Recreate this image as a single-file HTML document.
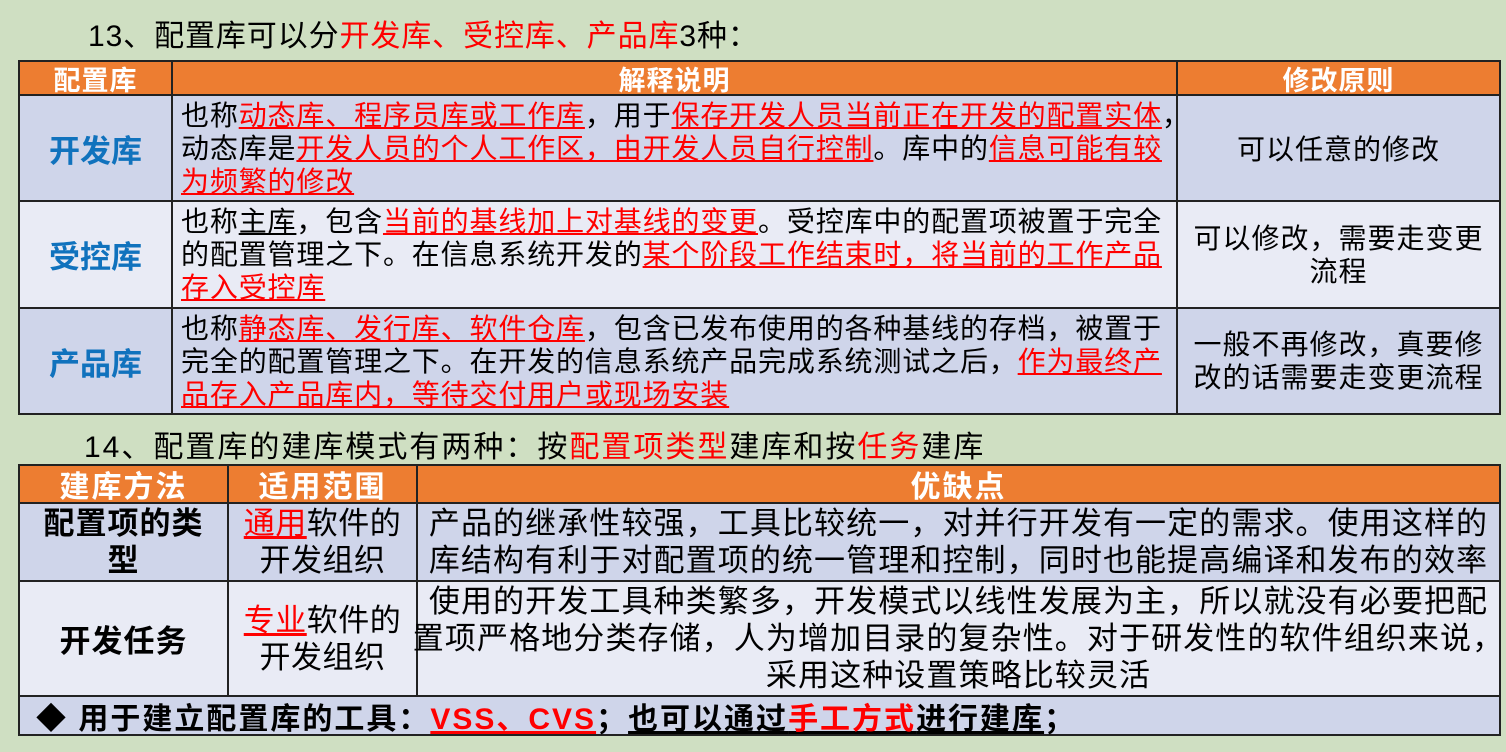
<!DOCTYPE html>
<html><head><meta charset="utf-8"><style>
*{margin:0;padding:0;box-sizing:border-box}
body{width:1506px;height:752px;background:#cfdfc2;font-family:"Liberation Sans","Noto Sans CJK SC",sans-serif;position:relative;overflow:hidden;color:#000}
.a{position:absolute}
.c{position:absolute;border:2px solid #222;display:flex;align-items:center;justify-content:center;text-align:center}
.h{background:#ed7d31;color:#fff;font-weight:bold;font-size:27px;letter-spacing:1px}
.d{background:#cfd5ea}.l{background:#e9ebf5}
.r{color:#f00}.u{text-decoration:underline}
.t{font-size:28px;line-height:33px;white-space:nowrap;letter-spacing:0.85px;text-align:left;justify-content:flex-start;padding-left:8px}
.b{font-weight:bold}
.t2{font-size:31px;line-height:37px;letter-spacing:1.1px;white-space:nowrap}
</style></head><body>
<div class="a" style="left:88px;top:11px;font-size:30px;letter-spacing:0.9px;white-space:nowrap">13、配置库可以分<span class="r">开发库、受控库、产品库</span>3种：</div>

<div class="c h" style="left:18px;top:60px;width:155px;height:36px">配置库</div>
<div class="c h" style="left:171px;top:60px;width:1007px;height:36px">解释说明</div>
<div class="c h" style="left:1176px;top:60px;width:325px;height:36px">修改原则</div>

<div class="c d b" style="left:18px;top:94px;width:155px;height:108px;color:#1072bd;font-size:31px">开发库</div>
<div class="c d t" style="left:171px;top:94px;width:1007px;height:108px"><div>也称<span class="r u">动态库、程序员库或工作库</span>，用于<span class="r u">保存开发人员当前正在开发的配置实体</span>，<br>动态库是<span class="r u">开发人员的个人工作区，由开发人员自行控制</span>。库中的<span class="r u">信息可能有较</span><br><span class="r u">为频繁的修改</span></div></div>
<div class="c d" style="left:1176px;top:94px;width:325px;height:108px;font-size:28px;letter-spacing:1px">可以任意的修改</div>

<div class="c l b" style="left:18px;top:200px;width:155px;height:109px;color:#1072bd;font-size:31px">受控库</div>
<div class="c l t" style="left:171px;top:200px;width:1007px;height:109px"><div>也称<span class="u">主库</span>，包含<span class="r u">当前的基线加上对基线的变更</span>。受控库中的配置项被置于完全<br>的配置管理之下。在信息系统开发的<span class="r u">某个阶段工作结束时，将当前的工作产品</span><br><span class="r u">存入受控库</span></div></div>
<div class="c l" style="left:1176px;top:200px;width:325px;height:109px;font-size:28px;line-height:33px;letter-spacing:1px">可以修改，需要走变更<br>流程</div>

<div class="c d b" style="left:18px;top:307px;width:155px;height:108px;color:#1072bd;font-size:31px">产品库</div>
<div class="c d t" style="left:171px;top:307px;width:1007px;height:108px"><div>也称<span class="r u">静态库、发行库、软件仓库</span>，包含已发布使用的各种基线的存档，被置于<br>完全的配置管理之下。在开发的信息系统产品完成系统测试之后，<span class="r u">作为最终产</span><br><span class="r u">品存入产品库内，等待交付用户或现场安装</span></div></div>
<div class="c d" style="left:1176px;top:307px;width:325px;height:108px;font-size:28px;line-height:33px;letter-spacing:1px">一般不再修改，真要修<br>改的话需要走变更流程</div>

<div class="a" style="left:84px;top:422px;font-size:30px;letter-spacing:2px;white-space:nowrap">14、配置库的建库模式有两种：按<span class="r">配置项类型</span>建库和按<span class="r">任务</span>建库</div>

<div class="c h" style="left:18px;top:464px;width:211px;height:40px;font-size:30px;letter-spacing:2px">建库方法</div>
<div class="c h" style="left:227px;top:464px;width:191px;height:40px;font-size:30px;letter-spacing:2px">适用范围</div>
<div class="c h" style="left:416px;top:464px;width:1085px;height:40px;font-size:30px;letter-spacing:2px">优缺点</div>

<div class="c d b" style="left:18px;top:502px;width:211px;height:80px;font-size:31px;line-height:37px;letter-spacing:1px">配置项的类<br>型</div>
<div class="c d t2" style="left:227px;top:502px;width:191px;height:80px;letter-spacing:0.5px"><div><span class="r u">通用</span>软件的<br>开发组织</div></div>
<div class="c d t2" style="left:416px;top:502px;width:1085px;height:80px">产品的继承性较强，工具比较统一，对并行开发有一定的需求。使用这样的<br>库结构有利于对配置项的统一管理和控制，同时也能提高编译和发布的效率</div>

<div class="c l b" style="left:18px;top:580px;width:211px;height:117px;font-size:31px;letter-spacing:1px">开发任务</div>
<div class="c l t2" style="left:227px;top:580px;width:191px;height:117px;letter-spacing:0.5px"><div><span class="r u">专业</span>软件的<br>开发组织</div></div>
<div class="c l t2" style="left:416px;top:580px;width:1085px;height:117px">使用的开发工具种类繁多，开发模式以线性发展为主，所以就没有必要把配<br>置项严格地分类存储，人为增加目录的复杂性。对于研发性的软件组织来说，<br>采用这种设置策略比较灵活</div>

<div class="c d b" style="left:18px;top:695px;width:1483px;height:41px;font-size:30px;letter-spacing:2px;justify-content:flex-start;padding-left:16px;white-space:nowrap">◆&nbsp;用于建立配置库的工具：<span class="r u">VSS、CVS</span>；<span class="u">也可以通过<span class="r">手工方式</span>进行建库</span>；</div>
</body></html>
